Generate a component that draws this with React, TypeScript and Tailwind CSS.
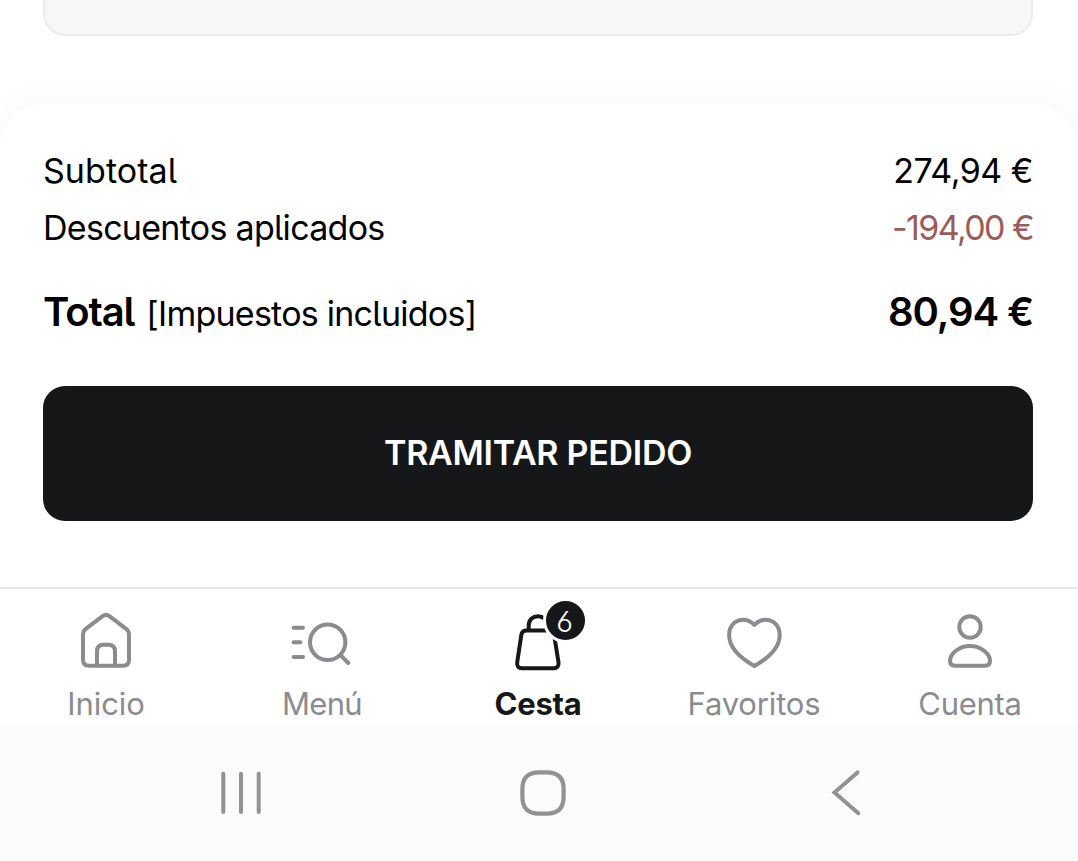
import { useState } from "react";
import type { ReactNode } from "react";

type TabKey = "inicio" | "menu" | "cesta" | "favoritos" | "cuenta";

const tabs: { key: TabKey, label: string, spacing: string, icon: ReactNode }[] = [
    {
        key: "inicio",
        label: "Inicio",
        spacing: "tracking-[-0.1px]",
        icon: (
            <>
                <path d="M13 30.7Q13 27 15.8 24.9L32.6 12.2Q36 9.6 39.4 12.2L56.2 24.9Q59 27 59 30.7V55.7Q59 61.7 53 61.7H19Q13 61.7 13 55.7Z" />
                <path d="M27 61V47.2Q27 40.7 33.5 40.7H38.5Q45 40.7 45 47.2V61" />
            </>
        ),
    },
    {
        key: "menu",
        label: "Menú",
        spacing: "tracking-[-0.7px]",
        icon: (
            <>
                <path d="M7.6 23.7H17M7.6 38.3H14.3M7.6 53H17" />
                <circle cx="41.7" cy="38.3" r="17.7" />
                <path d="M54.5 51.2L62.3 59" />
            </>
        ),
    },
    {
        key: "cesta",
        label: "Cesta",
        spacing: "tracking-[-0.3px]",
        icon: (
            <>
                <path d="M24.5 26.4H47.2Q51.4 26.4 52 30.5L56.5 58.2Q57.2 64.3 51.5 64.3H20.2Q14.5 64.3 15.2 58.2L19.4 30.5Q20.2 26.4 24.5 26.4Z" />
                <path d="M26.7 26V21.5C26.7 9 45.3 9 45.3 21.5V26" />
            </>
        ),
    },
    {
        key: "favoritos",
        label: "Favoritos",
        spacing: "tracking-[-0.15px]",
        icon: (
            <path d="M36.4 20.8C40.2 17 44 15.7 47.6 15.7C55.6 15.7 61.7 22 61.7 31C61.7 43.5 51.5 53.5 36.4 62C21.3 53.5 11.1 43.5 11.1 31C11.1 22 17.2 15.7 25.2 15.7C28.8 15.7 32.6 17 36.4 20.8Z" />
        ),
    },
    {
        key: "cuenta",
        label: "Cuenta",
        spacing: "tracking-[-0.3px]",
        icon: (
            <>
                <circle cx="36" cy="23" r="10.7" />
                <path d="M36 42C47 42 56 49.8 56 56.8Q56 61.7 51 61.7H21Q16 61.7 16 56.8C16 49.8 25 42 36 42Z" />
            </>
        ),
    },
];

function OrderSummary() {
    return (
        <section className="h-[483px] rounded-t-[44px] bg-white pt-[45px] pr-[45px] pl-[43px] shadow-[0_0_40px_rgba(0,0,0,0.035)]">
            <div className="flex h-[42px] items-center justify-between text-[34px]">
                <span className="tracking-[0.05px]">Subtotal</span>
                <span className="tracking-[-0.5px]">274,94 €</span>
            </div>
            <div className="mt-[15px] flex h-[42px] items-center justify-between text-[34px]">
                <span className="tracking-[-0.72px]">Descuentos aplicados</span>
                <span className="tracking-[-1.6px] text-[#9c5b58]">-194,00 €</span>
            </div>
            <div className="mt-[34px] flex h-[50px] items-baseline justify-between">
                <div className="flex items-baseline gap-[12px]">
                    <span className="text-[40px] font-semibold tracking-[-1.1px]">Total</span>
                    <span className="text-[34px] tracking-[-0.75px]">[Impuestos incluidos]</span>
                </div>
                <span className="text-[40px] font-semibold tracking-[-1.1px]">80,94 €</span>
            </div>
            <button className="mt-[54px] flex h-[135px] w-full items-center justify-center rounded-[22px] bg-[#161719] pb-[2px] text-[34px] font-semibold tracking-[-0.28px] text-white">
                TRAMITAR PEDIDO
            </button>
        </section>
    );
}

function TabBar() {
    const [active, setActive] = useState<TabKey>("cesta");

    return (
        <nav className="-ml-[2px] flex h-[140px] w-[1080px] border-t-2 border-[#e6e6e6] bg-white pt-[15px]">
            {tabs.map((tab) => (
                <button
                    key={tab.key}
                    onClick={() => setActive(tab.key)}
                    className={`flex w-[216px] flex-col items-center ${active === tab.key ? "font-bold text-[#161719]" : "text-[#8a8c8f]"}`}
                >
                    <span className="relative">
                        <svg className="h-[72px] w-[72px]" viewBox="0 0 72 72" fill="none" stroke="currentColor" strokeWidth="4" strokeLinecap="round" strokeLinejoin="round">
                            {tab.icon}
                        </svg>
                        {tab.key === "cesta" && (
                            <span className="absolute -top-[6px] left-[41px] flex h-[45px] w-[45px] items-center justify-center rounded-full border-[3px] border-white bg-[#161719] pt-[2px] pr-[2px] text-[29px] font-light text-white [font-feature-settings:'cv03']">
                                6
                            </span>
                        )}
                    </span>
                    <span className={`mt-[9px] text-[31px] leading-[38px] ${tab.spacing}`}>{tab.label}</span>
                </button>
            ))}
        </nav>
    );
}

function SystemBar() {
    return (
        <div className="flex h-[134px] items-start justify-between bg-[#fbfbfb] pt-[36px] pr-[202px] pl-[211px] text-[#929292]">
            <svg className="h-[60px] w-[60px]" viewBox="0 0 60 60" fill="none" stroke="currentColor" strokeWidth="4" strokeLinecap="round">
                <path d="M12.3 10.7V49M30 10.7V49M47.7 10.7V49" />
            </svg>
            <svg className="h-[60px] w-[60px]" viewBox="0 0 60 60" fill="none" stroke="currentColor" strokeWidth="4.2">
                <path d="M25 9.4H33Q49.6 9.4 49.6 26V34Q49.6 50.6 33 50.6H25Q8.4 50.6 8.4 34V26Q8.4 9.4 25 9.4Z" />
            </svg>
            <svg className="h-[60px] w-[60px]" viewBox="0 0 60 60" fill="none" stroke="currentColor" strokeWidth="4" strokeLinecap="round">
                <path d="M41.5 9.4L18.5 29.6L42.3 50.2" />
            </svg>
        </div>
    );
}

export default function App() {
    return (
        <div className="flex h-[861px] w-[1078px] flex-col overflow-hidden bg-white font-['Inter',sans-serif] text-black [font-feature-settings:'cv05']">
            {/* Bottom edge of the last card in the scrolled list */}
            <div className="mr-[45px] mb-[68px] ml-[43px] h-[36px] shrink-0 rounded-b-[22px] border-2 border-t-0 border-[#ebebeb] bg-[#f7f7f7]"></div>
            <OrderSummary />
            <TabBar />
            <SystemBar />
        </div>
    );
}
